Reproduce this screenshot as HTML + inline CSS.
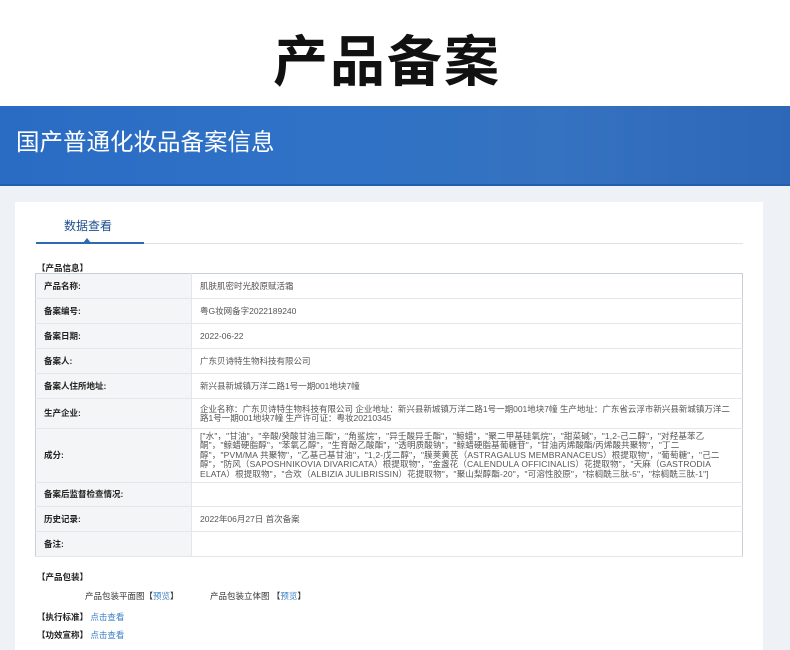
<!DOCTYPE html>
<html><head><meta charset="utf-8"><style>
*{margin:0;padding:0;box-sizing:border-box}
body{width:790px;height:650px;overflow:hidden;background:#fff;font-family:"Liberation Sans","Noto Sans CJK SC",sans-serif;position:relative}
.t{position:absolute;top:27px;left:-8px;width:790px;text-align:center;font-size:55px;font-weight:bold;color:#111;letter-spacing:2px;line-height:70px}
.ban{position:absolute;top:106px;left:0;width:790px;height:80px;background:linear-gradient(90deg,#2a6cc4,#2f72c6 40%,#3572c0 70%,#2d67b8);border-bottom:2px solid #1f5fae}
.ban span{position:absolute;left:16px;top:17px;color:#fff;font-size:23.5px}
.bg{position:absolute;top:186px;left:0;width:790px;height:464px;background:#eef2f6}
.card{position:absolute;top:202px;left:15px;width:748px;height:448px;background:#fff}
.tab{position:absolute;left:64px;top:217px;font-size:12px;color:#1f4e8c}
.ln{position:absolute;left:36px;top:243px;width:707px;height:1px;background:#dfe3e8}
.ln2{position:absolute;left:36px;top:242px;width:108px;height:2px;background:#2a6bb3}
.tri{position:absolute;left:83px;top:238px;width:0;height:0;border-left:4px solid transparent;border-right:4px solid transparent;border-bottom:5px solid #2a6bb3}
.h{position:absolute;font-size:8.5px;font-weight:bold;color:#222}
table{position:absolute;left:35px;top:273px;width:708px;border-collapse:collapse;border:1.5px solid #c7cfd8;font-size:8.5px}
td{border-bottom:1px solid #e3e6ea;padding:0 8px;color:#555;line-height:9px}
td.ing{letter-spacing:0.15px;line-height:9.5px}
td.l{width:156px;background:#f4f5f7;font-weight:bold;color:#222;border-right:1px solid #e3e6ea}
.s{position:absolute;font-size:8.5px;color:#333}
.a{color:#3b82c4}
</style></head><body>
<div class="t">产品备案</div>
<div class="ban"><span>国产普通化妆品备案信息</span></div>
<div class="bg"></div>
<div class="card"></div>
<div class="tab">数据查看</div>
<div class="ln"></div><div class="ln2"></div><div class="tri"></div>
<div class="h" style="left:37px;top:262px">【产品信息】</div>
<table>
<tr style="height:25px"><td class="l">产品名称:</td><td>肌肤肌密时光胶原赋活霜</td></tr>
<tr style="height:25px"><td class="l">备案编号:</td><td>粤G妆网备字2022189240</td></tr>
<tr style="height:25px"><td class="l">备案日期:</td><td>2022-06-22</td></tr>
<tr style="height:25px"><td class="l">备案人:</td><td>广东贝诗特生物科技有限公司</td></tr>
<tr style="height:25px"><td class="l">备案人住所地址:</td><td>新兴县新城镇万洋二路1号一期001地块7幢</td></tr>
<tr style="height:30px"><td class="l">生产企业:</td><td>企业名称：广东贝诗特生物科技有限公司 企业地址：新兴县新城镇万洋二路1号一期001地块7幢 生产地址：广东省云浮市新兴县新城镇万洋二路1号一期001地块7幢 生产许可证：粤妆20210345</td></tr>
<tr style="height:54px"><td class="l">成分:</td><td class="ing">["水"，"甘油"，"辛酸/癸酸甘油三酯"，"角鲨烷"，"异壬酸异壬酯"，"鲸蜡"，"聚二甲基硅氧烷"，"甜菜碱"，"1,2-己二醇"，"对羟基苯乙酮"，"鲸蜡硬脂醇"，"苯氧乙醇"，"生育酚乙酸酯"，"透明质酸钠"，"鲸蜡硬脂基葡糖苷"，"甘油丙烯酸酯/丙烯酸共聚物"，"丁二醇"，"PVM/MA 共聚物"，"乙基己基甘油"，"1,2-戊二醇"，"膜荚黄芪（ASTRAGALUS MEMBRANACEUS）根提取物"，"葡萄糖"，"己二醇"，"防风（SAPOSHNIKOVIA DIVARICATA）根提取物"，"金盏花（CALENDULA OFFICINALIS）花提取物"，"天麻（GASTRODIA ELATA）根提取物"，"合欢（ALBIZIA JULIBRISSIN）花提取物"，"聚山梨醇酯-20"，"可溶性胶原"，"棕榈酰三肽-5"，"棕榈酰三肽-1"]</td></tr>
<tr style="height:24px"><td class="l">备案后监督检查情况:</td><td></td></tr>
<tr style="height:25px"><td class="l">历史记录:</td><td>2022年06月27日 首次备案</td></tr>
<tr style="height:25px"><td class="l">备注:</td><td></td></tr>
</table>
<div class="h" style="left:37px;top:571px">【产品包装】</div>
<div class="s" style="left:85px;top:590px">产品包装平面图【<span class="a">预览</span>】</div>
<div class="s" style="left:210px;top:590px">产品包装立体图 【<span class="a">预览</span>】</div>
<div class="h" style="left:37px;top:611px">【执行标准】 <span class="a" style="font-weight:normal">点击查看</span></div>
<div class="h" style="left:37px;top:629px">【功效宣称】 <span class="a" style="font-weight:normal">点击查看</span></div>
</body></html>
